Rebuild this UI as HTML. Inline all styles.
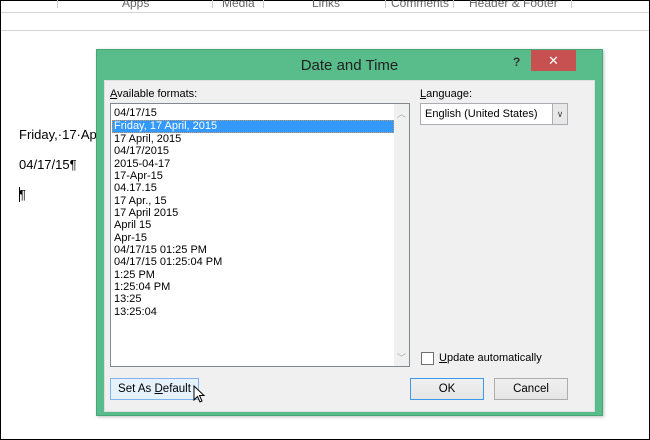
<!DOCTYPE html>
<html><head><style>
*{margin:0;padding:0;box-sizing:border-box}
body{width:650px;height:440px;background:#fff;position:relative;overflow:hidden;font-family:"Liberation Sans",sans-serif;font-size:11px;color:#000}
.abs{position:absolute}
.rib{font-size:12px;color:#666;top:-4px}
.sep{top:0;width:1px;height:8px;background:#ccc}
.doc{font-size:13px;left:19px}
.item{position:absolute;left:3px;height:12px;line-height:12px;white-space:nowrap}
.btn{position:absolute;height:22px;border:1px solid #adadad;background:linear-gradient(#f0f0f0,#e5e5e5);text-align:center;line-height:20px;font-size:11.5px}
</style></head><body>
<div class="abs" style="left:0;top:0;width:650px;height:440px;border:1px solid #000;border-top-width:1px"></div>
<div class="abs rib" style="left:122px">Apps</div>
<div class="abs rib" style="left:222px">Media</div>
<div class="abs rib" style="left:312px">Links</div>
<div class="abs rib" style="left:391px">Comments</div>
<div class="abs rib" style="left:469px">Header &amp; Footer</div>
<div class="abs sep" style="left:57px"></div>
<div class="abs sep" style="left:212px"></div>
<div class="abs sep" style="left:263px"></div>
<div class="abs sep" style="left:385px"></div>
<div class="abs sep" style="left:453px"></div>
<div class="abs sep" style="left:571px"></div>
<div class="abs" style="left:1px;top:12px;width:648px;height:1px;background:#d4d4d4"></div>
<div class="abs" style="left:1px;top:30px;width:648px;height:1px;background:#d4d4d4"></div>
<div class="abs doc" style="top:127px">Friday,·17·Ap</div>
<div class="abs doc" style="top:157px">04/17/15¶</div>
<div class="abs doc" style="top:187px">¶</div>
<div class="abs" style="left:19px;top:187px;width:1px;height:15px;background:#000"></div>

<div class="abs" style="left:96px;top:49px;width:507px;height:367px;background:#59bd8b;border:1px solid #47a577;box-shadow:1px 1px 3px rgba(0,0,0,.25)"></div>
<div class="abs" style="left:97px;top:51px;width:505px;height:29px;text-align:center;line-height:30px;font-size:15px;color:#222">Date and Time</div>
<div class="abs" style="left:513px;top:55px;font-size:12px;font-weight:bold;color:#333">?</div>
<div class="abs" style="left:531px;top:50px;width:45px;height:21px;background:#c75050;color:#fff;text-align:center;line-height:21px;font-size:13px">✕</div>
<div class="abs" style="left:104px;top:80px;width:491px;height:332px;background:#f0f0f0;border:1px solid #dedede"></div>

<div class="abs" style="left:110px;top:88px"><u>A</u>vailable formats:</div>
<div class="abs" style="left:420px;top:88px"><u>L</u>anguage:</div>
<div class="abs" style="left:110px;top:103px;width:300px;height:264px;background:#fff;border:1px solid #828790">
 <div class="abs" style="right:0;top:0;width:15px;height:262px;background:#f0f0f0"></div>
 <div class="abs" style="right:3px;top:3px;color:#aaa;font-size:9px">︿</div>
 <div class="abs" style="right:3px;bottom:2px;color:#aaa;font-size:9px">﹀</div>
 <div class="item" style="top:3px">04/17/15</div>
 <div class="abs" style="left:1px;top:16px;width:282px;height:13px;background:#3399ff;border:1px dotted #c96"></div>
 <div class="item" style="top:16px;color:#fff">Friday, 17 April, 2015</div>
 <div class="item" style="top:29px">17 April, 2015</div>
 <div class="item" style="top:41px">04/17/2015</div>
 <div class="item" style="top:54px">2015-04-17</div>
 <div class="item" style="top:66px">17-Apr-15</div>
 <div class="item" style="top:78px">04.17.15</div>
 <div class="item" style="top:91px">17 Apr., 15</div>
 <div class="item" style="top:103px">17 April 2015</div>
 <div class="item" style="top:115px">April 15</div>
 <div class="item" style="top:128px">Apr-15</div>
 <div class="item" style="top:140px">04/17/15 01:25 PM</div>
 <div class="item" style="top:152px">04/17/15 01:25:04 PM</div>
 <div class="item" style="top:165px">1:25 PM</div>
 <div class="item" style="top:177px">1:25:04 PM</div>
 <div class="item" style="top:189px">13:25</div>
 <div class="item" style="top:202px">13:25:04</div>
</div>
<div class="abs" style="left:420px;top:103px;width:148px;height:22px;background:#fff;border:1px solid #abadb3">
 <div class="abs" style="left:4px;top:4px">English (United States)</div>
 <div class="abs" style="right:0;top:0;width:15px;height:20px;background:#e8e8e8;border-left:1px solid #abadb3;text-align:center;line-height:20px;font-size:9px;color:#444">∨</div>
</div>
<div class="abs" style="left:421px;top:352px;width:13px;height:13px;background:#fff;border:1px solid #707070"></div>
<div class="abs" style="left:439px;top:352px"><u>U</u>pdate automatically</div>
<div class="btn" style="left:410px;top:378px;width:74px;border-color:#3c9ae8">OK</div>
<div class="btn" style="left:494px;top:378px;width:74px">Cancel</div>
<div class="btn" style="left:110px;top:378px;width:89px;border-color:#7eb4ea;background:#e5f1fb">Set As <u>D</u>efault</div>
<svg class="abs" style="left:193px;top:385px" width="14" height="20" viewBox="0 0 14 20"><path d="M1 1 L1 15 L4.5 11.5 L7 17 L9 16 L6.5 10.5 L11 10.5 Z" fill="#fff" stroke="#000" stroke-width="1"/></svg>
</body></html>
